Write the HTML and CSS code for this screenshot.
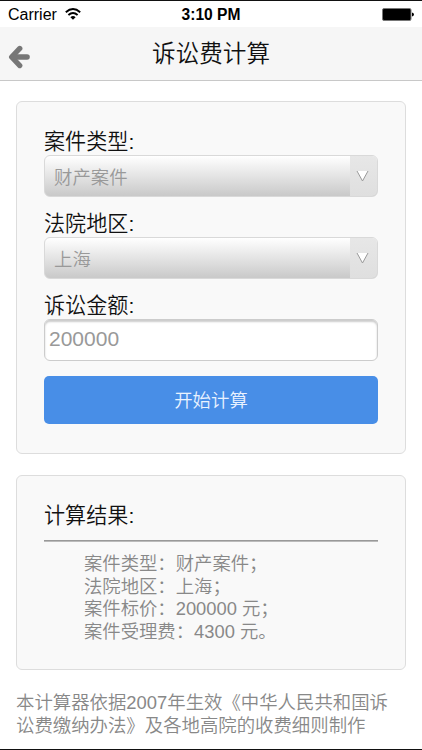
FILE: index.html
```html
<!DOCTYPE html>
<html lang="zh-CN">
<head>
<meta charset="utf-8">
<title>诉讼费计算</title>
<link rel="stylesheet" href="styles.css">
</head>
<body>
<div class="status">
  <div class="carrier">Carrier
    <svg class="wifi" width="16" height="12" viewBox="0 0 16 12" fill="none" stroke="#000" stroke-width="1.9"><path d="M.8 4.2Q8-2.1 15.2 4.2M3.4 7Q8 3 12.6 7"/><path d="M8 11.8 5.4 9.2Q8 7 10.6 9.2Z" fill="#000" stroke="none"/></svg>
  </div>
  <div class="time">3:10 PM</div>
  <svg class="battery" width="32" height="13" viewBox="0 0 32 13"><rect x=".5" y=".5" width="28.5" height="12" rx="1.5" fill="#000" stroke="#777"/><path d="M30 4.5q2 .3 2 2t-2 2z" fill="#000"/></svg>
</div>
<header class="header">
  <svg class="back" width="22" height="24" viewBox="0 0 22 24" fill="none" stroke="#777" stroke-width="5.2"><path d="M11.8 3.4 3.6 12l8.2 8.6" stroke-linecap="round" stroke-linejoin="round"/><path d="M5 12h14" stroke-linecap="round" stroke-width="5.6"/></svg>
  <h1 class="title">诉讼费计算</h1>
</header>
<main class="content">
  <section class="panel form">
    <div class="label">案件类型:</div>
    <div class="select"><span class="value">财产案件</span><span class="drop"><svg width="13" height="12" viewBox="0 0 13 12"><path d="M1 1h11L6.5 11z" fill="#fff"/><path d="M1 1l5.5 10L12 1" fill="none" stroke="#999"/></svg></span></div>
    <div class="label">法院地区:</div>
    <div class="select"><span class="value">上海</span><span class="drop"><svg width="13" height="12" viewBox="0 0 13 12"><path d="M1 1h11L6.5 11z" fill="#fff"/><path d="M1 1l5.5 10L12 1" fill="none" stroke="#999"/></svg></span></div>
    <div class="label">诉讼金额:</div>
    <div class="input">200000</div>
    <div class="button">开始计算</div>
  </section>
  <section class="panel result">
    <div class="label">计算结果:</div>
    <div class="rule"></div>
    <div class="lines">
      <div>案件类型：财产案件；</div>
      <div>法院地区：上海；</div>
      <div>案件标价：200000 元；</div>
      <div>案件受理费：4300 元。</div>
    </div>
  </section>
  <p class="note">本计算器依据2007年生效《中华人民共和国诉<br>讼费缴纳办法》及各地高院的收费细则制作</p>
</main>
</body>
</html>
```
FILE: styles.css
```css
* { box-sizing: border-box; }
body {
  margin: 0;
  height: 750px;
  overflow: hidden;
  background: #fff;
  border-top: 1px solid #111;
  border-bottom: 1px solid #111;
  font-family: "Liberation Sans", "Noto Sans CJK SC", sans-serif;
  font-weight: 350;
  color: #111;
}
svg { display: block; }
.status {
  height: 26px;
  padding: 0 8px;
  display: grid;
  grid-template-columns: 1fr auto 1fr;
  align-items: center;
}
.carrier {
  display: flex;
  align-items: center;
  gap: 8px;
  font-size: 16px;
  line-height: 26px;
  padding-top: 1px;
  color: #000;
}
.wifi { margin-top: -3px; }
.time {
  font-size: 15.6px;
  line-height: 26px;
  padding-top: 1px;
  font-weight: bold;
  color: #000;
}
.battery { justify-self: end; margin-top: -1px; }
.header {
  height: 54px;
  background: #f6f6f6;
  border-bottom: 1px solid #c8c8c8;
  display: grid;
  grid-template-columns: 40px 1fr 40px;
  align-items: center;
}
.back { margin: 6px 0 0 8px; }
.title {
  margin: 0;
  padding-top: 2px;
  text-align: center;
  font-size: 23.6px;
  line-height: 51px;
  font-weight: 350;
}
.content { padding: 20px 16px 0; }
.panel {
  background: #f9f9f9;
  border: 1px solid #ddd;
  border-radius: 6px;
  padding: 0 27px;
}
.form { height: 353px; padding-top: 25px; }
.label { font-size: 21.1px; line-height: 30px; height: 28px; }
.select {
  height: 42px;
  margin-bottom: 12px;
  display: flex;
  border: 1px solid #d9d9d9;
  border-radius: 6px;
  overflow: hidden;
  background: linear-gradient(#fff, #c9c9c9);
}
.value {
  flex: 1;
  padding-left: 9px;
  font-size: 18.4px;
  line-height: 43px;
  color: #999;
}
.drop {
  width: 27px;
  background: linear-gradient(#e7e7e7, #dfdfdf);
  display: flex;
  justify-content: center;
  padding: 14px 2px 0 0;
}
.input {
  height: 42px;
  border: 1px solid #ccc;
  border-radius: 6px;
  background: #fff;
  box-shadow: inset 0 2px 2px #ccc;
  padding-left: 4px;
  font-size: 21px;
  line-height: 38px;
  color: #999;
}
.button {
  margin-top: 15px;
  height: 48px;
  border-radius: 5px;
  background: #488ee7;
  color: #e9f2ff;
  text-align: center;
  font-size: 18.4px;
  line-height: 50px;
}
.result { margin-top: 21px; height: 195px; padding-top: 25px; }
.rule { height: 2px; margin-top: 11px; background: linear-gradient(#999 50%, #bbb 50%); }
.lines {
  margin: 11px 0 0 40px;
  font-size: 18.35px;
  line-height: 22.5px;
  color: #888;
}
.note {
  margin: 22px -10px 0 0;
  font-size: 18.4px;
  line-height: 22.5px;
  color: #888;
  white-space: nowrap;
}
```
